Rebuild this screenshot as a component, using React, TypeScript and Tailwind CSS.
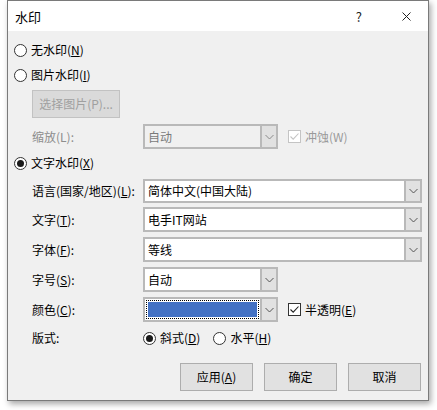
import React from "react";

const font = { fontFamily: '"Noto Sans CJK SC", "Noto Sans", sans-serif' };

function Radio({ checked }: { checked?: boolean }) {
  return (
    <span className="w-[13px] h-[13px] rounded-full border border-[#333333] bg-white flex items-center justify-center shrink-0">
      {checked && <span className="w-[7px] h-[7px] rounded-full bg-[#1a1a1a]" />}
    </span>
  );
}

function Check({ checked, disabled }: { checked?: boolean; disabled?: boolean }) {
  return (
    <span
      className={`w-[13px] h-[13px] border bg-white flex items-center justify-center shrink-0 ${
        disabled ? "border-[#c4c4c4]" : "border-[#333333]"
      }`}
    >
      {checked && (
        <svg width="11" height="11" viewBox="0 0 11 11">
          <path
            d="M1.5 5.5 L4.2 8.2 L9.5 2.5"
            fill="none"
            stroke={disabled ? "#c4c4c4" : "#222222"}
            strokeWidth="1.1"
          />
        </svg>
      )}
    </span>
  );
}

function Chevron({ disabled }: { disabled?: boolean }) {
  return (
    <svg width="9" height="6" viewBox="0 0 9 6">
      <path d="M0.5 1 L4.5 5 L8.5 1" fill="none" stroke={disabled ? "#8a8a8a" : "#555555"} strokeWidth="1" />
    </svg>
  );
}

function Combo({
  width,
  height,
  text,
  disabled,
  color,
}: {
  width: string;
  height: string;
  text?: string;
  disabled?: boolean;
  color?: boolean;
}) {
  return (
    <div className={`${width} ${height} flex border-2 border-[#b9b9b9] bg-white`}>
      <div
        className={`flex-1 flex items-center ${color ? "p-[1px]" : "pl-[3px]"} ${
          disabled ? "bg-[#f0f0f0] text-[#7a7a7a]" : "bg-white text-black"
        }`}
      >
        {color ? (
          <div className="w-full h-full border border-dotted border-black p-[1px] bg-white">
            <div className="w-full h-full bg-[#4472c4]" />
          </div>
        ) : (
          text
        )}
      </div>
      <div className="w-[16px] border-l-2 border-[#b9b9b9] bg-[#e1e1e1] flex items-center justify-center">
        <Chevron disabled={disabled} />
      </div>
    </div>
  );
}

function Label({ children, grey }: { children: React.ReactNode; grey?: boolean }) {
  return <div className={`w-[111px] ${grey ? "text-[#8d8d8d]" : "text-black"}`}>{children}</div>;
}

export default function App() {
  return (
    <div className="w-[437px] h-[410px] bg-white text-[12px] leading-none" style={font}>
      <div className="ml-[7px] w-[422px] h-[401px] border border-[#7a7a7a] bg-[#f0f0f0] shadow-[2px_3px_6px_rgba(0,0,0,0.35)] flex flex-col">
        <div className="h-[30px] bg-white flex items-center shrink-0">
          <div className="ml-[7px] text-[13px] text-black">水印</div>
          <div className="ml-auto mr-[40px] text-[13px] text-[#222]">?</div>
          <svg width="9" height="9" viewBox="0 0 9 9" className="mr-[17px]">
            <path d="M0.5 0.5 L8.5 8.5 M8.5 0.5 L0.5 8.5" stroke="#222" strokeWidth="1" />
          </svg>
        </div>
        <div className="flex flex-col pl-[6px] pt-[9px]">
          <div className="h-[20px] flex items-center gap-[4px]">
            <Radio />
            <span>
              无水印(<u>N</u>)
            </span>
          </div>
          <div className="h-[20px] mt-[5px] flex items-center gap-[4px]">
            <Radio />
            <span>
              图片水印(<u>I</u>)
            </span>
          </div>
          <div className="mt-[5px] ml-[18px] w-[88px] h-[28px] border border-[#c2c2c2] bg-[#dadada] flex items-center justify-center text-[#a0a0a0]">
            选择图片(P)...
          </div>
          <div className="mt-[6px] ml-[18px] h-[25px] flex items-center">
            <Label grey>缩放(L):</Label>
            <Combo width="w-[135px]" height="h-[25px]" text="自动" disabled />
            <div className="ml-[10px] flex items-center gap-[4px] text-[#9a9a9a]">
              <Check checked disabled />
              <span>冲蚀(W)</span>
            </div>
          </div>
          <div className="h-[20px] mt-[4px] flex items-center gap-[4px]">
            <Radio checked />
            <span>
              文字水印(<u>X</u>)
            </span>
          </div>
          <div className="mt-[6px] ml-[18px] h-[24px] flex items-center">
            <Label>
              语言(国家/地区)(<u>L</u>):
            </Label>
            <Combo width="w-[279px]" height="h-[24px]" text="简体中文(中国大陆)" />
          </div>
          <div className="mt-[4px] ml-[18px] h-[25px] flex items-center">
            <Label>
              文字(<u>T</u>):
            </Label>
            <Combo width="w-[279px]" height="h-[25px]" text="电手IT网站" />
          </div>
          <div className="mt-[5px] ml-[18px] h-[25px] flex items-center">
            <Label>
              字体(<u>F</u>):
            </Label>
            <Combo width="w-[279px]" height="h-[25px]" text="等线" />
          </div>
          <div className="mt-[5px] ml-[18px] h-[25px] flex items-center">
            <Label>
              字号(<u>S</u>):
            </Label>
            <Combo width="w-[135px]" height="h-[25px]" text="自动" />
          </div>
          <div className="mt-[5px] ml-[18px] h-[25px] flex items-center">
            <Label>
              颜色(<u>C</u>):
            </Label>
            <Combo width="w-[135px]" height="h-[25px]" color />
            <div className="ml-[10px] flex items-center gap-[4px]">
              <Check checked />
              <span>
                半透明(<u>E</u>)
              </span>
            </div>
          </div>
          <div className="mt-[6px] ml-[18px] h-[20px] flex items-center">
            <Label>版式:</Label>
            <div className="flex items-center gap-[4px]">
              <Radio checked />
              <span>
                斜式(<u>D</u>)
              </span>
            </div>
            <div className="ml-[13px] flex items-center gap-[4px]">
              <Radio />
              <span>
                水平(<u>H</u>)
              </span>
            </div>
          </div>
          <div className="mt-[15px] flex justify-end gap-[11px] pr-[7px]">
            <div className="w-[73px] h-[28px] border border-[#adadad] bg-[#e1e1e1] flex items-center justify-center">
              <span>
                应用(<u>A</u>)
              </span>
            </div>
            <div className="w-[73px] h-[28px] border border-[#adadad] bg-[#e1e1e1] flex items-center justify-center">
              确定
            </div>
            <div className="w-[73px] h-[28px] border border-[#adadad] bg-[#e1e1e1] flex items-center justify-center">
              取消
            </div>
          </div>
        </div>
      </div>
    </div>
  );
}
